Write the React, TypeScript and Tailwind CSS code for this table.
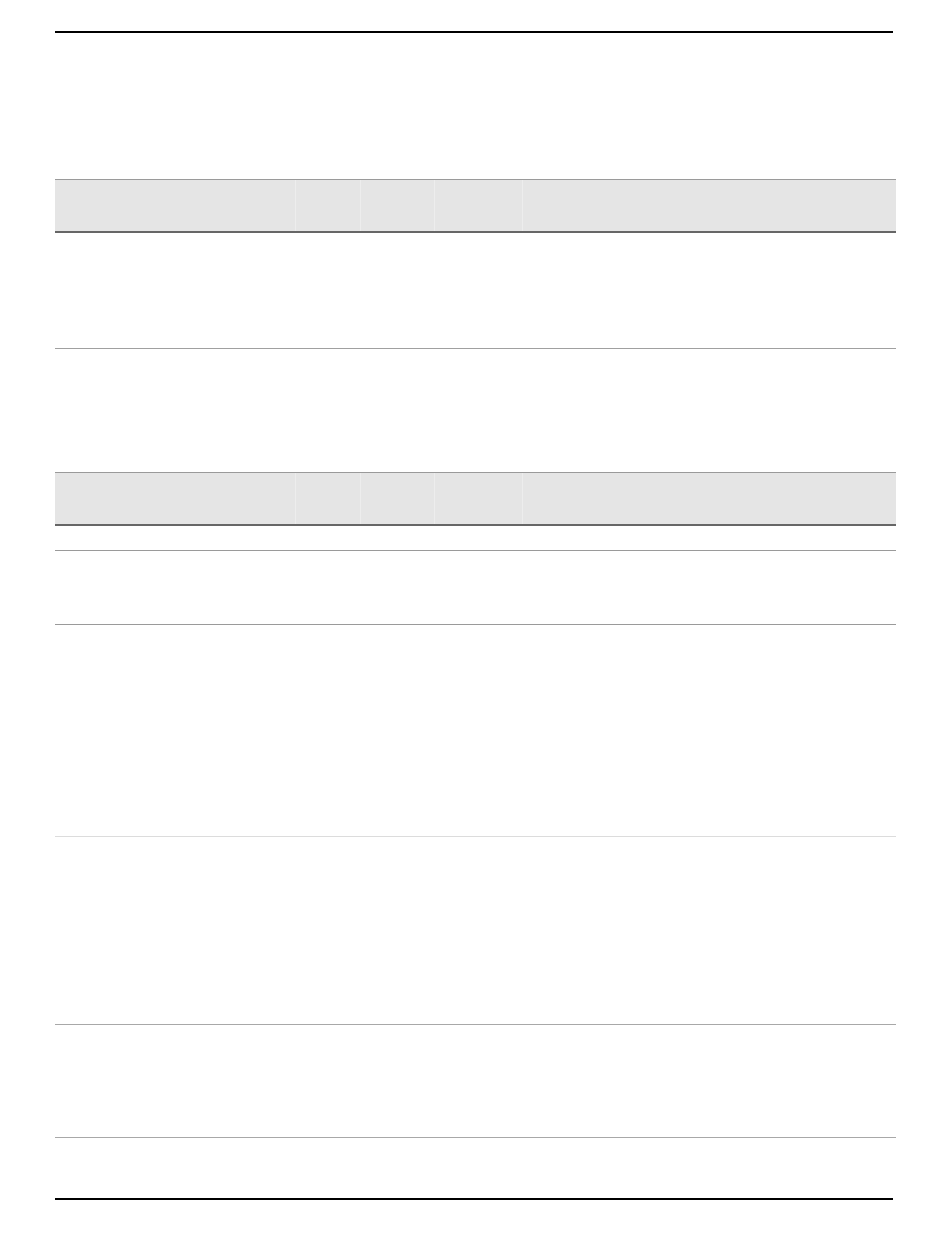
import React from 'react';

const cols = ['w-[240px]', 'w-[65px]', 'w-[74px]', 'w-[88px]', 'flex-1'];

const HeaderRow: React.FC = () => (
  <div className="flex h-[54px] bg-[#e5e5e5] border-t border-t-[#9a9a9a] border-b-2 border-b-[#666666]">
    {cols.map((c, i) => (
      <div
        key={i}
        className={`${c} h-full ${i > 0 ? 'border-l border-l-[#ededed]' : ''}`}
      />
    ))}
  </div>
);

const BodyRow: React.FC<{ h: string; line: string }> = ({ h, line }) => (
  <div className={`flex ${h} border-b ${line}`}>
    {cols.map((c, i) => (
      <div key={i} className={`${c} h-full`} />
    ))}
  </div>
);

export default function App() {
  return (
    <div
      className="w-[950px] h-[1260px] bg-white pl-[55px] pt-[31px]"
      style={{ fontFamily: '"Liberation Sans", Arial, sans-serif' }}
    >
      {/* Page rule */}
      <div className="w-[838px] h-[2px] bg-black" />

      {/* Table 1 */}
      <div className="w-[841px] mt-[146px]">
        <HeaderRow />
        <BodyRow h="h-[116px]" line="border-b-[#a0a0a0]" />
      </div>

      {/* Table 2 */}
      <div className="w-[841px] mt-[123px]">
        <HeaderRow />
        <BodyRow h="h-[25px]" line="border-b-[#9a9a9a]" />
        <BodyRow h="h-[74px]" line="border-b-[#9a9a9a]" />
        <BodyRow h="h-[212px]" line="border-b-[#dcdcdc]" />
        <BodyRow h="h-[188px]" line="border-b-[#a8a8a8]" />
        <BodyRow h="h-[113px]" line="border-b-[#a8a8a8]" />
      </div>

      {/* Footer rule */}
      <div className="w-[838px] h-[2px] bg-black mt-[60px]" />
    </div>
  );
}
